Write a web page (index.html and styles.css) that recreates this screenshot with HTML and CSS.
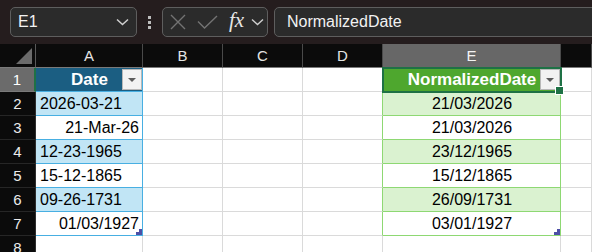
FILE: index.html
```html
<!DOCTYPE html>
<html lang="en">
<head>
    <meta charset="UTF-8">
    <title>Normalized Dates</title>
    <link rel="stylesheet" href="styles.css">
</head>
<body>

    <div class="toolbar">
        <div class="namebox">
            <span>E1</span>
            <svg width="13" height="8" viewBox="0 0 13 8"><path d="M1 1.5 L6.5 6.5 L12 1.5" fill="none" stroke="#cfcfcf" stroke-width="1.5"/></svg>
        </div>
        <div class="grip"><i></i><i></i><i></i></div>
        <div class="fxbox">
            <svg class="ico-x" width="16" height="16" viewBox="0 0 16 16"><path d="M1 1 L15 15 M15 1 L1 15" stroke="#737373" stroke-width="1.4"/></svg>
            <svg class="ico-ok" width="21" height="14" viewBox="0 0 21 14"><path d="M1 6.5 L7.5 13 L20 1" fill="none" stroke="#737373" stroke-width="1.4"/></svg>
            <span class="fx">fx</span>
            <svg class="ico-down" width="13" height="8" viewBox="0 0 13 8"><path d="M1 1.5 L6.5 6.5 L12 1.5" fill="none" stroke="#cfcfcf" stroke-width="1.4"/></svg>
        </div>
        <div class="formula">NormalizedDate</div>
    </div>

    <div class="sheet">
        <!-- column headers -->
        <div class="corner"><i></i></div>
        <div class="colhead">A</div>
        <div class="colhead">B</div>
        <div class="colhead">C</div>
        <div class="colhead">D</div>
        <div class="colhead active">E</div>
        <div class="colhead"></div>

        <!-- row 1 -->
        <div class="rowhead active">1</div>
        <div class="cell ta-head">Date<span class="filter"></span></div>
        <div class="cell"></div>
        <div class="cell"></div>
        <div class="cell"></div>
        <div class="cell tb-head selected">NormalizedDate<span class="filter"></span></div>
        <div class="cell"></div>

        <!-- row 2 -->
        <div class="rowhead">2</div>
        <div class="cell ta band">2026-03-21</div>
        <div class="cell"></div>
        <div class="cell"></div>
        <div class="cell edge-b"></div>
        <div class="cell tb band">21/03/2026</div>
        <div class="cell"></div>

        <!-- row 3 -->
        <div class="rowhead">3</div>
        <div class="cell ta right">21-Mar-26</div>
        <div class="cell"></div>
        <div class="cell"></div>
        <div class="cell edge-b"></div>
        <div class="cell tb">21/03/2026</div>
        <div class="cell"></div>

        <!-- row 4 -->
        <div class="rowhead">4</div>
        <div class="cell ta band">12-23-1965</div>
        <div class="cell"></div>
        <div class="cell"></div>
        <div class="cell edge-b"></div>
        <div class="cell tb band">23/12/1965</div>
        <div class="cell"></div>

        <!-- row 5 -->
        <div class="rowhead">5</div>
        <div class="cell ta">15-12-1865</div>
        <div class="cell"></div>
        <div class="cell"></div>
        <div class="cell edge-b"></div>
        <div class="cell tb">15/12/1865</div>
        <div class="cell"></div>

        <!-- row 6 -->
        <div class="rowhead">6</div>
        <div class="cell ta band">09-26-1731</div>
        <div class="cell"></div>
        <div class="cell"></div>
        <div class="cell edge-b"></div>
        <div class="cell tb band">26/09/1731</div>
        <div class="cell"></div>

        <!-- row 7 -->
        <div class="rowhead">7</div>
        <div class="cell ta right last">01/03/1927</div>
        <div class="cell"></div>
        <div class="cell"></div>
        <div class="cell edge-b"></div>
        <div class="cell tb last">03/01/1927</div>
        <div class="cell"></div>

        <!-- row 8 -->
        <div class="rowhead">8</div>
        <div class="cell"></div>
        <div class="cell"></div>
        <div class="cell"></div>
        <div class="cell"></div>
        <div class="cell"></div>
        <div class="cell"></div>
    </div>

</body>
</html>
```

FILE: styles.css
```css
* {
    margin: 0;
    padding: 0;
    box-sizing: border-box;
}

body {
    width: 592px;
    height: 252px;
    overflow: hidden;
    background: #fff;
    font-family: "Liberation Sans", Arial, sans-serif;
}

/* formula bar */
.toolbar {
    height: 44px;
    background: #251d1e;
    display: flex;
    align-items: flex-start;
    padding: 7px 0 0 10px;
    color: #f2f2f2;
    font-size: 16px;
}

.namebox,
.fxbox,
.formula {
    height: 30px;
    background: #2b2b2b;
    border: 1px solid #5e5e5e;
    border-radius: 5px;
    display: flex;
    align-items: center;
}

.namebox {
    width: 127px;
    padding: 0 7px 0 7px;
    justify-content: space-between;
}

.grip {
    width: 4px;
    margin: 9px 0 0 11px;
    display: flex;
    flex-direction: column;
    gap: 2px;
}

.grip i {
    width: 3px;
    height: 3px;
    background: #bdbdbd;
}

.fxbox {
    width: 106px;
    margin-left: 10px;
    padding-left: 7px;
}

.ico-ok {
    margin-left: 11px;
}

.fx {
    margin-left: 11px;
    font-family: "Liberation Serif", "Times New Roman", serif;
    font-style: italic;
    font-size: 21px;
    color: #e6e6e6;
    line-height: 1;
    margin-top: -3px;
}

.ico-down {
    margin-left: 7px;
}

.formula {
    flex: 1;
    margin-left: 6px;
    margin-right: -10px;
    padding-left: 12px;
}

/* sheet grid */
.sheet {
    display: grid;
    grid-template-columns: 36px 107px 80px 80px 80px 178px 1fr;
    grid-auto-rows: 24px;
    font-size: 16px;
}

.sheet > div {
    display: flex;
    align-items: center;
    border-right: 1px solid #dadada;
    border-bottom: 1px solid #dadada;
    white-space: nowrap;
}

.corner {
    background: #0b0b0b;
    justify-content: flex-end;
    align-items: flex-end !important;
    padding: 0 3px 3px 0;
    border-right-color: #5a5a5a !important;
    border-bottom-color: #7a7a7a !important;
}

.corner i {
    width: 16px;
    height: 16px;
    background: #6b6b6b;
    clip-path: polygon(100% 0, 100% 100%, 0 100%);
}

.colhead {
    background: #0b0b0b;
    color: #e4e4e4;
    font-size: 15px;
    justify-content: center;
    border-right-color: #4a4a4a !important;
    border-bottom-color: #7a7a7a !important;
}

.colhead.active {
    background: #676767;
    color: #f4f4f4;
    border-bottom: 1px solid #1e7145 !important;
}

.rowhead {
    background: #0b0b0b;
    color: #ececec;
    font-size: 15px;
    justify-content: center;
    border-right-color: #2e2e2e !important;
    border-bottom-color: #262626 !important;
}

.rowhead.active {
    background: #6b6b6b;
    color: #fff;
    border-right: 2px solid #1e7145 !important;
    border-bottom-color: #7a7a7a !important;
}

.cell {
    color: #000;
    padding: 0 3px 0 4px;
}

.right {
    justify-content: flex-end;
}

/* table in column A */
.ta-head {
    position: relative;
    background: #1b5e82;
    color: #fff;
    font-weight: bold;
    font-size: 17px;
    justify-content: center;
    border-right-color: #48afe2 !important;
    border-bottom-color: #48afe2 !important;
}

.ta {
    border-right-color: #48afe2 !important;
    border-bottom-color: #48afe2 !important;
}

.ta.band {
    background: #c1e5f5;
}

/* table in column E */
.tb-head {
    position: relative;
    background: #4ea72e;
    color: #fff;
    font-weight: bold;
    font-size: 17px;
    justify-content: center;
}

.tb {
    justify-content: center;
    border-right-color: #8ed873 !important;
    border-bottom-color: #8ed873 !important;
}

.tb.band {
    background: #daf2d0;
}

.edge-b {
    border-right-color: #8ed873 !important;
}

.filter {
    position: absolute;
    right: 0;
    top: 1px;
    width: 20px;
    height: 21px;
    background: #f2f2f2;
    border: 1px solid #b8b8b8;
}

.filter::after {
    content: "";
    position: absolute;
    left: 5px;
    top: 8px;
    border-left: 4px solid transparent;
    border-right: 4px solid transparent;
    border-top: 4px solid #5c5c5c;
}

.selected {
    z-index: 2;
    outline: 2px solid #1e7145;
    outline-offset: -1px;
}

.selected::after {
    content: "";
    position: absolute;
    right: -4px;
    bottom: -4px;
    width: 7px;
    height: 7px;
    background: #1e7145;
    border: 1px solid #fff;
}

.last {
    position: relative;
}

.last::after {
    content: "";
    position: absolute;
    right: 0;
    bottom: 0;
    width: 6px;
    height: 6px;
    background: #4d4fa6;
    clip-path: polygon(100% 0, 100% 100%, 0 100%, 0 50%, 50% 50%, 50% 0);
}
```
